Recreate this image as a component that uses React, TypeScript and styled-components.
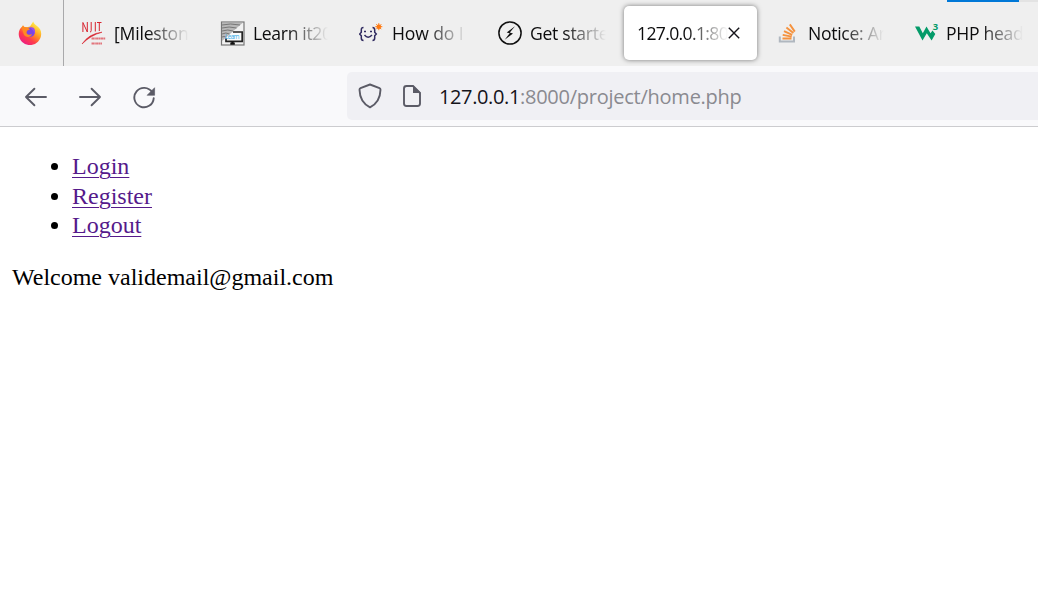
import React from "react";
import styled, { createGlobalStyle } from "styled-components";

const GlobalStyle = createGlobalStyle`
  * { box-sizing: border-box; }
  html, body { margin: 0; background: #fff; }
`;

const Browser = styled.div`
  width: 100%;
  height: 616px;
  overflow: hidden;
  background: #fff;
  font-family: "Open Sans", "Noto Sans", sans-serif;
`;

const TabStrip = styled.div`
  position: relative;
  display: flex;
  height: 66px;
  background: #efefef;
  overflow: hidden;
`;

const WindowEdge = styled.div`
  position: absolute;
  top: 0;
  right: 0;
  width: 91px;
  height: 2px;
  background: linear-gradient(to right, #0078d7 72px, #e3e3e3 72px);
`;

const PinnedTab = styled.div`
  flex: none;
  display: flex;
  align-items: center;
  width: 64px;
  padding-left: 18px;
  border-right: 1px solid #a9a9ab;
`;

const Tabs = styled.div`
  display: flex;
  gap: 6px;
  padding: 6px 0 6px 4px;
`;

const Tab = styled.div<{ $active?: boolean }>`
  flex: none;
  display: flex;
  align-items: center;
  width: 133px;
  height: 54px;
  padding: 0 ${(p) => (p.$active ? 17 : 12)}px 0 13px;
  border-radius: 5px;
  background: ${(p) => (p.$active ? "#fff" : "transparent")};
  box-shadow: ${(p) => (p.$active ? "0 0 5px rgba(0, 0, 0, 0.5)" : "none")};

  > svg { flex: none; }
`;

const TabTitle = styled.span<{ $gap: number; $spacing: number }>`
  flex: 1;
  min-width: 0;
  margin-left: ${(p) => p.$gap}px;
  overflow: hidden;
  white-space: nowrap;
  font-size: 17.6px;
  line-height: 26px;
  letter-spacing: ${(p) => p.$spacing}px;
  color: #0c0c0d;
  mask-image: linear-gradient(to left, transparent, #000 42px);
`;

const Toolbar = styled.div`
  display: flex;
  align-items: center;
  height: 61px;
  padding-left: 24px;
  background: #f9f9fb;
  border-bottom: 1px solid #cccccf;
`;

const NavButtons = styled.div`
  display: flex;
  gap: 30px;
  width: 323px;
  padding-top: 2px;
`;

const AddressBar = styled.div`
  flex: 1;
  display: flex;
  align-items: center;
  height: 48px;
  margin-bottom: 1px;
  padding-left: 11px;
  border-radius: 5px 0 0 5px;
  background: #f0f0f4;

  > svg { flex: none; margin-right: 18px; }
  > svg + svg { margin-right: 15px; }
`;

const Url = styled.span`
  font-size: 20px;
  line-height: 28px;
  margin-top: 3px;
  white-space: nowrap;
  letter-spacing: -0.25px;
  color: #8a8a90;
`;

const Host = styled.span`
  color: #15141a;
  letter-spacing: -0.38px;
`;

const Page = styled.main`
  padding: 25px 12px;
  font-family: "Liberation Serif", "Times New Roman", serif;
  font-size: 24px;
  line-height: 29.5px;
  color: #000;
`;

const LinkList = styled.ul`
  margin: 0 0 22px;
  padding-left: 60px;
`;

const PageLink = styled.a`
  color: #551a8b;
  text-decoration: underline;
  text-decoration-thickness: 1px;
  text-underline-offset: 3px;
`;

const Welcome = styled.div``;

const FirefoxIcon = () => (
  <svg width="24" height="24" viewBox="0 0 24 24">
    <defs>
      <linearGradient id="flame" x1="0.8" y1="0.1" x2="0.2" y2="0.95">
        <stop offset="0" stopColor="#fff04a" />
        <stop offset="0.38" stopColor="#ff9a20" />
        <stop offset="0.68" stopColor="#ff3d4a" />
        <stop offset="1" stopColor="#ec1b87" />
      </linearGradient>
    </defs>
    <path d="M5 4.200 6.500 6 9 6.200 12 5.500 15.200.6c.5 2 2 3 3.800 4.500 3 2.500 4.200 4.600 4.200 7.600A11.200 11.200 0 0 1 .7 13C.7 9.500 2.200 7.200 3.600 6.200z" fill="url(#flame)" />
    <circle cx="12.200" cy="11.200" r="4.700" fill="#7a45e5" />
    <path d="M3.500 6.300 6 5.900l3.500.7 2.500 1.700-3 1.400-.5 2.200c1 2 3.600 2.300 5.500 1.200-1 3.400-5.500 4-8 1z" fill="#ff8a22" />
    <path d="M12 6.500c2.500-.6 4 .2 4.800 2.200l.3 4-2-3.200z" fill="#9a50e8" />
  </svg>
);

const NjitIcon = () => (
  <svg width="25" height="26" viewBox="0 0 25 26" fill="none" stroke="#d8232f">
    <path d="M1.900 12V2.500L6.300 12V2M10.200 2v8.500q0 1.500-1.200 1.500M14.300 2v9.500M16 2.500h4.500M18.300 2.500v8.500" strokeWidth="1" />
    <path d="M1 24Q8 13.500 21 12.200 10 15 1 24" fill="#d8232f" strokeWidth=".6" />
    <path d="M10.500 18.500h14M10.500 23.500h10.500" strokeWidth="1.800" strokeDasharray="2.500 .3 1.500 .3" opacity=".6" />
  </svg>
);

const LearnIcon = () => (
  <svg width="25" height="25" viewBox="0 0 25 25">
    <rect x="1.500" y="1" width="22.500" height="23" fill="#f1f1f1" stroke="#777" strokeWidth="1.200" />
    <path d="M13 11h9.200v9.300H6v-3" fill="#fafafa" stroke="#222" strokeWidth="1.700" />
    <path d="M2 2h20.500L2 20z" fill="#b8b8b8" />
    <path d="M2 4q8-2 18 0M2 7q7-2 14.500 0M2 10q6-2 11 0M2 13q4-2 7.500 0M2 16q2-1 4 0" fill="none" stroke="#666" strokeWidth=".8" />
    <path d="M12.500 20.500v3M10.300 22.700h4.500" stroke="#111" strokeWidth="2.300" />
    <text x="5" y="17.500" fontSize="6.500" fontFamily="Open Sans" fill="#35aee8" textLength="14.500">Learn</text>
  </svg>
);

const SmileIcon = () => (
  <svg width="24" height="24" viewBox="0 0 24 24" fill="none" stroke="#302b60">
    <path d="M4.500 6.500Q2.300 6.500 2.300 9v2.300L.7 13.100l1.600 1.700V17q0 2.500 2.200 2.500M13.500 6.500q2.200 0 2.200 2.500v2.300l1.600 1.800-1.600 1.700V17q0 2.500-2.200 2.500" strokeWidth="1.500" />
    <path d="M5.500 14q3.500 4.300 7.500 0" strokeWidth="1.500" />
    <path d="M5 10.500h2M11 10.500h2" strokeWidth="1.700" />
    <circle cx="19.800" cy="5.700" r="2.300" fill="#ff7a12" stroke="none" />
    <path d="M19.800 2.200v7M16.300 5.700h7M17.300 3.200l5 5M17.300 8.200l5-5" stroke="#ff7a12" strokeWidth="1" />
  </svg>
);

const BoltIcon = () => (
  <svg width="24" height="24" viewBox="0 0 24 24">
    <circle cx="12" cy="12" r="11.100" fill="none" stroke="#111" strokeWidth="1.500" />
    <path d="M17 5.200 8.700 11.500l3 .8-5 6.500 8.300-6.300-3.200-1z" fill="#111" />
  </svg>
);

const StackIcon = () => (
  <svg width="24" height="24" viewBox="0 0 24 24" fill="none">
    <path d="M3.800 15.500V20.500H18V15.500" stroke="#b0b7bf" strokeWidth="2" />
    <path d="M6.500 17.500h9M6.700 13.900l9 1.700M8 10.100l8.200 3.800M10.400 6.400l7 5.500M13.800 3.400l5 7.200" stroke="#f5923e" strokeWidth="1.900" />
  </svg>
);

const W3Icon = () => (
  <svg width="24" height="24" viewBox="0 0 24 24">
    <path d="M0 5.500h4.300l3.500 6.700 3.700-6.700 4 6.700 2-2.700 2.800 3.500-3.700 6.500-4.800-7.300-4.300 7.300z" fill="#049b69" />
    <text x="17.800" y="9.400" fontSize="9.500" fontWeight="700" fontFamily="Open Sans" fill="#049b69">3</text>
  </svg>
);

const CloseIcon = () => (
  <svg width="12" height="12" viewBox="0 0 12 12">
    <path d="m.8.8 10.400 10.400M11.200.8.8 11.200" stroke="#15141a" strokeWidth="1.400" />
  </svg>
);

const BackIcon = ({ flip = false }: { flip?: boolean }) => (
  <svg width="24" height="24" viewBox="0 0 24 24" fill="none" stroke="#5b5b66" strokeWidth="1.900" strokeLinecap="round" strokeLinejoin="round">
    <path d={flip ? "M2 12h20M13.600 3.700 22 12l-8.400 8.300" : "M22 12H2M10.400 3.700 2 12l8.400 8.300"} />
  </svg>
);

const ReloadIcon = () => (
  <svg width="24" height="24" viewBox="0 0 24 24" fill="none">
    <path d="M20.200 7.300A9.700 9.700 0 1 0 21.700 13.300" stroke="#5b5b66" strokeWidth="1.900" strokeLinecap="round" />
    <path d="M22.600 2.700v7.600h-7.500z" fill="#5b5b66" stroke="#5b5b66" strokeWidth=".6" strokeLinejoin="round" />
  </svg>
);

const ShieldIcon = () => (
  <svg width="24" height="26" viewBox="0 0 24 26">
    <path d="M12 1.500 21.500 5.200q1 .4 1 1.500C22.300 15 18.500 21 12 24.300 5.500 21 1.700 15 1.500 6.700q0-1.100 1-1.500z" fill="none" stroke="#5b5b66" strokeWidth="1.900" strokeLinejoin="round" />
  </svg>
);

const DocumentIcon = () => (
  <svg width="24" height="24" viewBox="0 0 24 24">
    <path d="M13 2H6.500Q4 2 4 4.500v15Q4 22 6.500 22h11q2.500 0 2.500-2.500V9z" fill="none" stroke="#5b5b66" strokeWidth="1.900" strokeLinejoin="round" />
    <path d="M13 1.300 20.800 9H13z" fill="#5b5b66" />
  </svg>
);

const tabs = [
  { icon: <NjitIcon />, title: "[Milestone", spacing: -0.2 },
  { icon: <LearnIcon />, title: "Learn it202", spacing: -0.35 },
  { icon: <SmileIcon />, title: "How do I", spacing: -0.15, gap: 9 },
  { icon: <BoltIcon />, title: "Get started", spacing: -0.3 },
  { title: "127.0.0.1:8000", spacing: -0.65, active: true, gap: 0 },
  { icon: <StackIcon />, title: "Notice: Array", spacing: -0.3 },
  { icon: <W3Icon />, title: "PHP header", spacing: -0.3, gap: 7 },
];

const links = ["Login", "Register", "Logout"];

export default function App() {
  return (
    <Browser>
      <GlobalStyle />
      <TabStrip>
        <PinnedTab><FirefoxIcon /></PinnedTab>
        <Tabs>
          {tabs.map((tab) => (
            <Tab key={tab.title} $active={tab.active}>
              {tab.icon}
              <TabTitle $gap={tab.gap ?? 8} $spacing={tab.spacing}>{tab.title}</TabTitle>
              {tab.active && <CloseIcon />}
            </Tab>
          ))}
        </Tabs>
        <WindowEdge />
      </TabStrip>
      <Toolbar>
        <NavButtons>
          <BackIcon />
          <BackIcon flip />
          <ReloadIcon />
        </NavButtons>
        <AddressBar>
          <ShieldIcon />
          <DocumentIcon />
          <Url><Host>127.0.0.1</Host>:8000/project/home.php</Url>
        </AddressBar>
      </Toolbar>
      <Page>
        <LinkList>
          {links.map((label) => (
            <li key={label}><PageLink href="#">{label}</PageLink></li>
          ))}
        </LinkList>
        <Welcome>Welcome validemail@gmail.com</Welcome>
      </Page>
    </Browser>
  );
}
